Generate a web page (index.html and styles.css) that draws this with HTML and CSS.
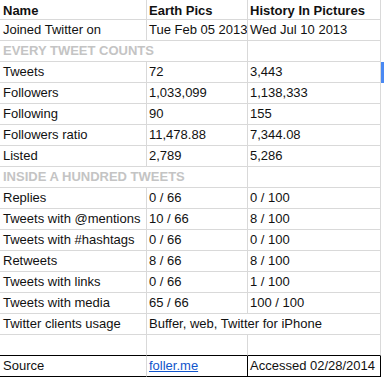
FILE: index.html
```html
<!DOCTYPE html>
<html lang="en">
<head>
    <meta charset="UTF-8">
    <meta name="viewport" content="width=device-width, initial-scale=1.0">
    <title>Earth Pics vs History In Pictures</title>
    <link rel="stylesheet" href="styles.css">
</head>
<body>
    <table class="sheet">
        <tr class="head">
            <th class="c1">Name</th>
            <th class="c2">Earth Pics</th>
            <th class="c3">History In Pictures</th>
            <th class="c4"></th>
        </tr>
        <tr>
            <td>Joined Twitter on</td>
            <td>Tue Feb 05 2013</td>
            <td>Wed Jul 10 2013</td>
            <td class="edge"></td>
        </tr>
        <tr class="section">
            <td colspan="2">EVERY TWEET COUNTS</td>
            <td></td>
            <td class="edge"></td>
        </tr>
        <tr>
            <td>Tweets</td>
            <td>72</td>
            <td>3,443</td>
            <td class="edge"><div class="selected"></div></td>
        </tr>
        <tr>
            <td>Followers</td>
            <td>1,033,099</td>
            <td>1,138,333</td>
            <td class="edge"></td>
        </tr>
        <tr>
            <td>Following</td>
            <td>90</td>
            <td>155</td>
            <td class="edge"></td>
        </tr>
        <tr>
            <td>Followers ratio</td>
            <td>11,478.88</td>
            <td>7,344.08</td>
            <td class="edge"></td>
        </tr>
        <tr>
            <td>Listed</td>
            <td>2,789</td>
            <td>5,286</td>
            <td class="edge"></td>
        </tr>
        <tr class="section">
            <td colspan="2">INSIDE A HUNDRED TWEETS</td>
            <td></td>
            <td class="edge"></td>
        </tr>
        <tr>
            <td>Replies</td>
            <td>0 / 66</td>
            <td>0 / 100</td>
            <td class="edge"></td>
        </tr>
        <tr>
            <td>Tweets with @mentions</td>
            <td>10 / 66</td>
            <td>8 / 100</td>
            <td class="edge"></td>
        </tr>
        <tr>
            <td>Tweets with #hashtags</td>
            <td>0 / 66</td>
            <td>0 / 100</td>
            <td class="edge"></td>
        </tr>
        <tr>
            <td>Retweets</td>
            <td>8 / 66</td>
            <td>8 / 100</td>
            <td class="edge"></td>
        </tr>
        <tr>
            <td>Tweets with links</td>
            <td>0 / 66</td>
            <td>1 / 100</td>
            <td class="edge"></td>
        </tr>
        <tr>
            <td>Tweets with media</td>
            <td>65 / 66</td>
            <td>100 / 100</td>
            <td class="edge"></td>
        </tr>
        <tr>
            <td>Twitter clients usage</td>
            <td colspan="2">Buffer, web, Twitter for iPhone</td>
            <td class="edge"></td>
        </tr>
        <tr class="spacer">
            <td></td>
            <td></td>
            <td></td>
            <td class="edge"></td>
        </tr>
        <tr class="source">
            <td>Source</td>
            <td class="link-cell"><a href="#">foller.me</a></td>
            <td class="boxed">Accessed 02/28/2014</td>
            <td class="edge"></td>
        </tr>
    </table>
</body>
</html>
```

FILE: styles.css
```css
body {
    margin: 0;
    background: #ffffff;
    font-family: "Liberation Sans", Arial, sans-serif;
    font-size: 13px;
    color: #111;
}

.sheet {
    border-collapse: separate;
    border-spacing: 0;
    table-layout: fixed;
    width: 384px;
}

.sheet th,
.sheet td {
    box-sizing: border-box;
    height: 21px;
    padding: 0 0 0 2px;
    line-height: 20px;
    text-align: left;
    white-space: nowrap;
    overflow: hidden;
    border-right: 1px solid #d9d9d9;
    border-bottom: 1px solid #d9d9d9;
}

.sheet tr td:first-child,
.sheet tr th:first-child {
    padding-left: 3px;
}

.head th {
    height: 20px;
    font-weight: bold;
    color: #111;
    padding-top: 2px;
    line-height: 17px;
}

.c1 { width: 147px; }
.c2 { width: 101px; }
.c3 { width: 133px; }
.c4 { width: 3px; }

.sheet .c4,
.sheet .edge {
    border: none;
    padding: 0;
}

.selected {
    width: 3px;
    height: 22px;
    margin-top: -1px;
    background: #4a89f3;
}

.section td {
    font-weight: bold;
    color: #c4c4c4;
}

.spacer td {
    border-bottom-color: #000;
}

.source td {
    border-bottom-color: #000;
}

.source .link-cell {
    border-right-color: #000;
}

.source .boxed {
    border-right-color: #000;
}

.link-cell a {
    color: #1155cc;
    text-decoration: underline;
}
```
